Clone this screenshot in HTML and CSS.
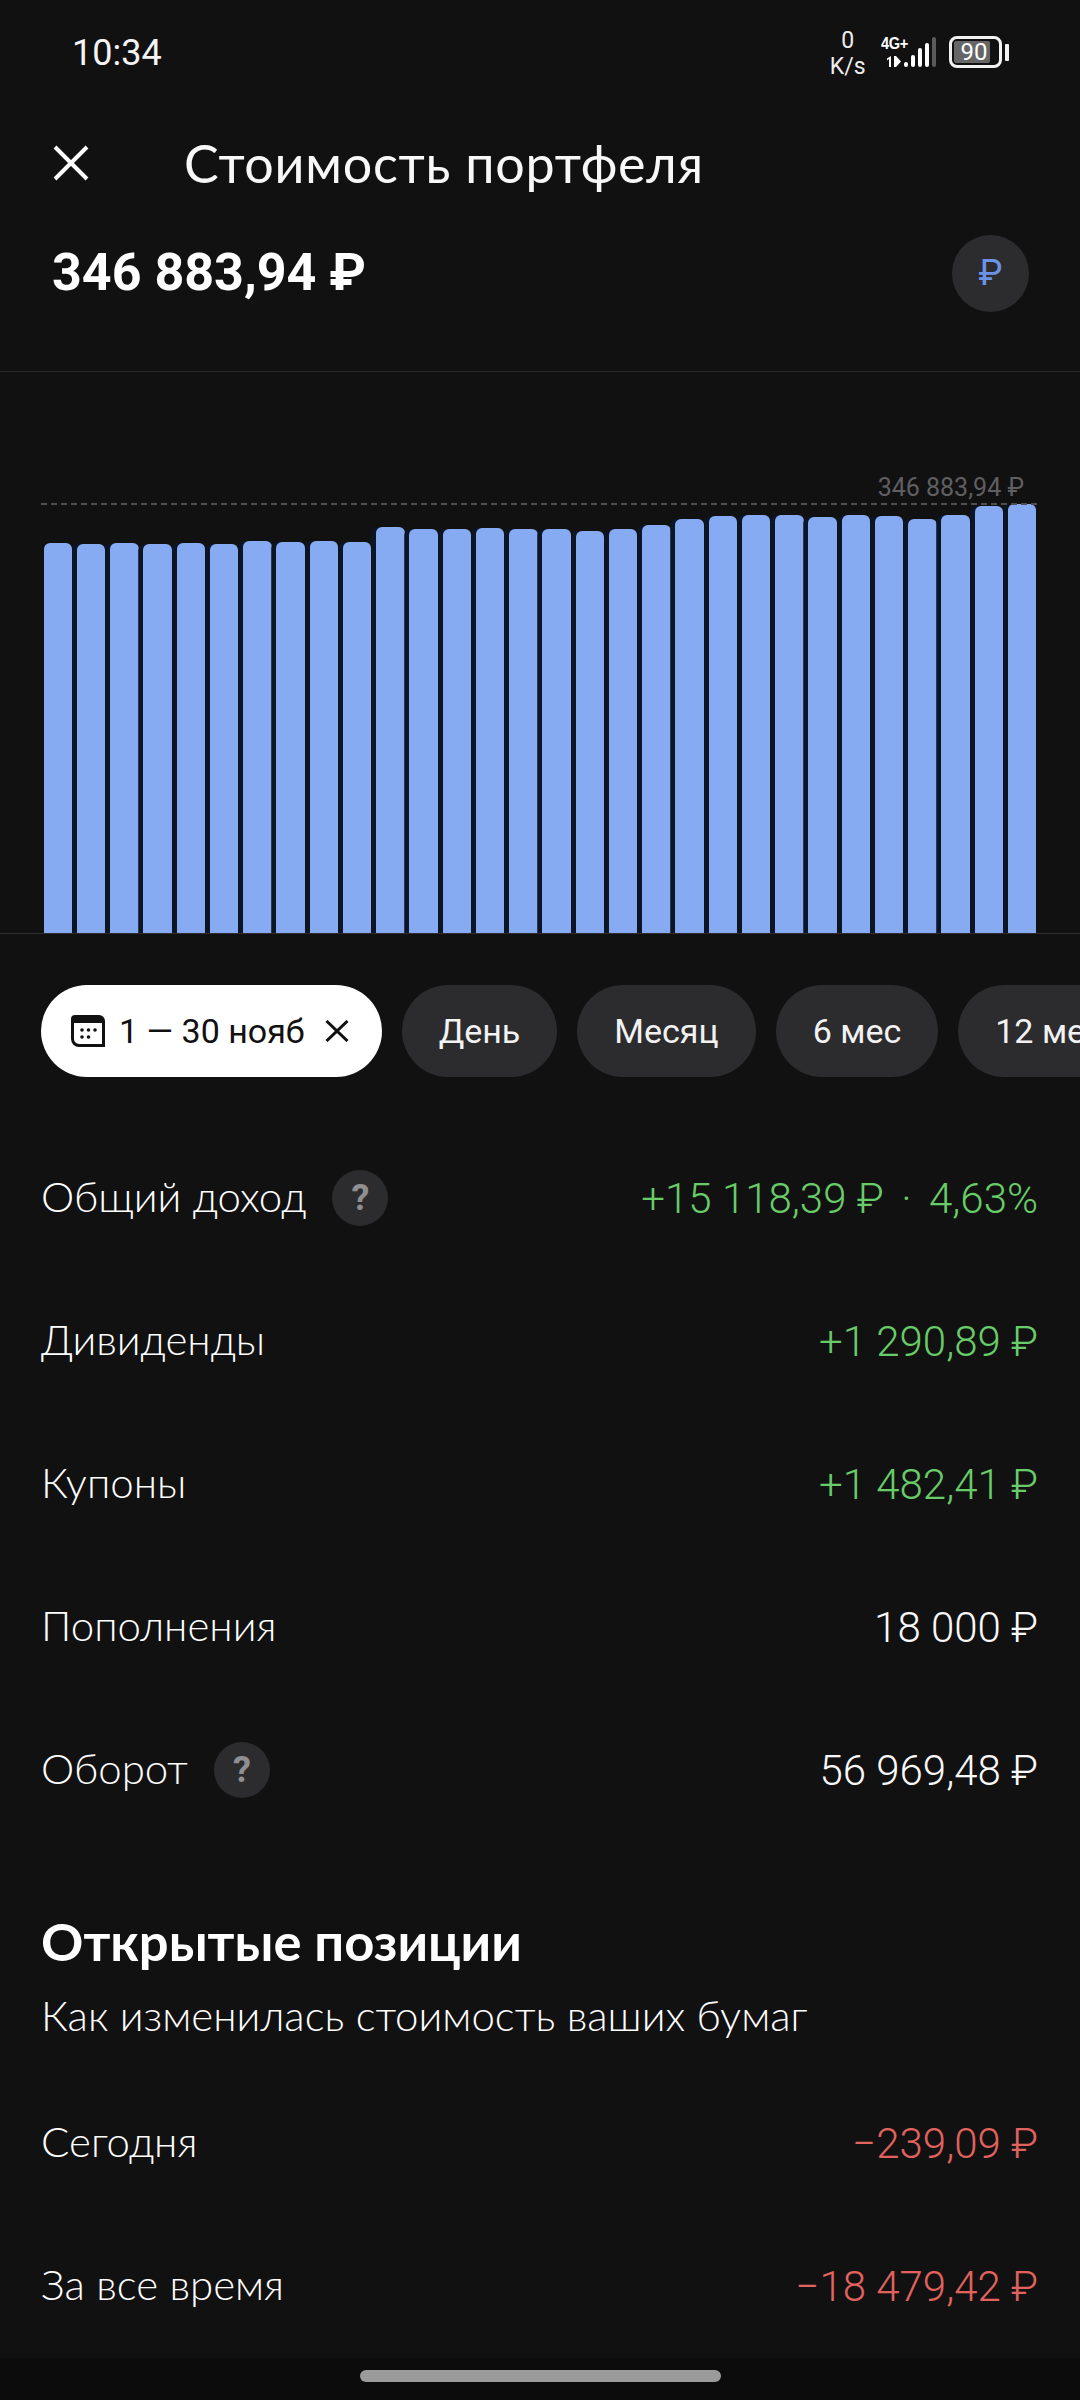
FILE: index.html
```html
<!DOCTYPE html>
<html lang="ru">
<head>
<meta charset="utf-8">
<title>Стоимость портфеля</title>
<link rel="stylesheet" href="styles.css">
</head>
<body>
<div class="screen">
  <header class="status">
    <span class="time">10:34</span>
    <div class="status-right">
      <div class="speed"><span>0</span><span>K/s</span></div>
      <div class="net">
        <span class="net-type">4G+</span>
        <svg class="net-arrows" width="15" height="11" viewBox="0 0 15 11"><path d="M4 0v11H2V3L0 4.500V2.500Z M7 0h2l0 0 5 5.500-5 5.500H7Z" fill="#fff"/></svg>
      </div>
      <div class="signal"><i class="s1"></i><i class="s2"></i><i class="s3"></i><i class="s4"></i><i class="s5"></i></div>
      <div class="battery"><div class="battery-body"><span class="battery-level">90</span></div><i class="battery-tip"></i></div>
    </div>
  </header>

  <div class="topbar">
    <svg class="close" width="36" height="36" viewBox="0 0 36 36"><path d="M2 2L34 34M34 2L2 34" stroke="#fff" stroke-width="4" fill="none"/></svg>
    <h1 class="title">Стоимость портфеля</h1>
  </div>

  <div class="summary">
    <span class="amount">346 883,94 ₽</span>
    <span class="coin">₽</span>
  </div>

  <div class="chart">
    <div class="max-line"></div>
    <span class="max-label">346 883,94 ₽</span>
    <div class="bars">
      <i class="bar" style="height:390px"></i><i class="bar" style="height:389px"></i><i class="bar" style="height:390px"></i><i class="bar" style="height:389.5px"></i><i class="bar" style="height:390px"></i><i class="bar" style="height:389.5px"></i><i class="bar" style="height:392px"></i><i class="bar" style="height:391.5px"></i><i class="bar" style="height:392px"></i><i class="bar" style="height:391.5px"></i><i class="bar" style="height:406px"></i><i class="bar" style="height:404px"></i><i class="bar" style="height:404px"></i><i class="bar" style="height:405px"></i><i class="bar" style="height:404px"></i><i class="bar" style="height:404px"></i><i class="bar" style="height:402px"></i><i class="bar" style="height:404px"></i><i class="bar" style="height:408px"></i><i class="bar" style="height:414px"></i><i class="bar" style="height:417px"></i><i class="bar" style="height:418px"></i><i class="bar" style="height:418px"></i><i class="bar" style="height:416px"></i><i class="bar" style="height:418px"></i><i class="bar" style="height:417px"></i><i class="bar" style="height:414px"></i><i class="bar" style="height:418px"></i><i class="bar" style="height:427px"></i><i class="bar" style="height:429px"></i>
    </div>
  </div>

  <nav class="chips">
    <div class="chip chip-active">
      <svg class="cal" width="34" height="32" viewBox="0 0 34 32"><path fill-rule="evenodd" d="M4 0H28a6 6 0 0 1 6 6V32H8a8 8 0 0 1-8-8V4a4 4 0 0 1 4-4Z M3 8V24a5 5 0 0 0 5 5H31V8Z" fill="#111"/><g fill="#111"><circle cx="11" cy="15" r="1.800"/><circle cx="17.500" cy="15" r="1.800"/><circle cx="24" cy="15" r="1.800"/><circle cx="11" cy="22" r="1.800"/><circle cx="17.500" cy="22" r="1.800"/></g></svg>
      <span>1 — 30 нояб</span>
      <svg class="chip-x" width="24" height="22" viewBox="0 0 24 22"><path d="M1.500 1L22.500 21M22.500 1L1.500 21" stroke="#111" stroke-width="3" fill="none"/></svg>
    </div>
    <div class="chip">День</div>
    <div class="chip">Месяц</div>
    <div class="chip">6 мес</div>
    <div class="chip">12 мес</div>
  </nav>

  <section class="rows">
    <div class="row"><div class="label"><span class="label-text">Общий доход</span><span class="hint">?</span></div><div class="value pos">+15 118,39 ₽<span class="dot">·</span>4,63%</div></div>
    <div class="row"><div class="label"><span class="label-text">Дивиденды</span></div><div class="value pos">+1 290,89 ₽</div></div>
    <div class="row"><div class="label"><span class="label-text">Купоны</span></div><div class="value pos">+1 482,41 ₽</div></div>
    <div class="row"><div class="label"><span class="label-text">Пополнения</span></div><div class="value">18 000 ₽</div></div>
    <div class="row"><div class="label"><span class="label-text">Оборот</span><span class="hint">?</span></div><div class="value">56 969,48 ₽</div></div>
  </section>

  <section class="positions">
    <h2 class="heading">Открытые позиции</h2>
    <p class="sub">Как изменилась стоимость ваших бумаг</p>
    <div class="row"><div class="label"><span class="label-text">Сегодня</span></div><div class="value neg">−239,09 ₽</div></div>
    <div class="row"><div class="label"><span class="label-text">За все время</span></div><div class="value neg">−18 479,42 ₽</div></div>
  </section>

  <footer class="navbar"><i class="handle"></i></footer>
</div>
</body>
</html>
```
FILE: styles.css
```css
* { box-sizing: border-box; margin: 0; padding: 0; }
html, body { background: #111112; }
body { font-family: "Lato", "Roboto", sans-serif; color: #fff; }
.screen { width: 1080px; height: 2400px; overflow: hidden; display: flex; flex-direction: column; background: #111112; }

.status { height: 96px; display: flex; justify-content: space-between; padding: 0 71px 0 72px; flex: none; }
.time { font: 400 36px/106px "Roboto", sans-serif; color: #f4f4f4; }
.status-right { display: flex; align-items: flex-start; padding-top: 28px; }
.speed { width: 46px; display: flex; flex-direction: column; align-items: center; font: 400 23px/26px "Roboto", sans-serif; color: #eee; margin-right: 10px; }
.net { width: 27px; height: 42px; margin-top: 7px; position: relative; }
.net-type { display: block; font: 700 17px/17px "Liberation Sans", sans-serif; letter-spacing: -.5px; transform: scaleX(.86); transform-origin: 0 0; white-space: nowrap; }
.net-arrows { position: absolute; left: 6px; top: 21px; }
.signal { display: flex; align-items: flex-end; gap: 2.600px; height: 30px; margin: 9px 0 0 -4px; }
.signal i { width: 4.400px; background: #fff; border-radius: 2px; }
.s1 { height: 5px; } .s2 { height: 12px; } .s3 { height: 19px; } .s4 { height: 24px; }
.signal .s5 { height: 30px; background: #5a5a5a; }
.battery { display: flex; align-items: center; margin: 8px 0 0 13px; }
.battery-body { width: 53px; height: 32px; border: 3px solid #f2f2f2; border-radius: 8px; padding: 2px 9px 2px 2px; display: flex; }
.battery-level { flex: 1; background: #666; border-radius: 2px; text-align: center; font: 400 24px/22px "Roboto", sans-serif; padding-left: 4px; }
.battery-tip { width: 4px; height: 17px; margin-left: 3px; background: #f2f2f2; border-radius: 1px; }

.topbar { height: 136px; display: flex; align-items: center; padding: 0 0 2px 53px; flex: none; }
.title { font-size: 52px; font-weight: 400; letter-spacing: .75px; margin-left: 95px; color: #f8f8f8; white-space: nowrap; }

.summary { height: 82px; margin-bottom: 57px; display: flex; justify-content: space-between; align-items: center; padding: 0 51px 0 52px; flex: none; }
.amount { font: 700 52px/1 "Roboto", sans-serif; }
.coin { width: 77px; height: 77px; border-radius: 50%; background: #2c2c2e; color: #6d93e6; font: 400 36px/77px "Roboto", sans-serif; text-align: center; }

.chart { height: 563px; flex: none; position: relative; border-top: 1px solid #29292b; border-bottom: 1px solid #2e2e30; display: flex; align-items: flex-end; padding-left: 43.500px; }
.bars { display: flex; align-items: flex-end; gap: 4.760px; }
.bar { display: block; width: 28.500px; flex: none; background: #86abf3; border-radius: 6px 6px 0 0; }
.bar + .bar { box-shadow: -4.760px 0 0 #0b1524; }
.max-line { position: absolute; left: 41px; right: 43px; top: 131px; border-top: 2px dashed #4f4f51; }
.max-label { position: absolute; right: 56px; top: 100px; font: 400 25px/32px "Roboto", sans-serif; color: #5f5f61; }

.chips { display: flex; gap: 20px; padding: 51px 0 0 41px; flex: none; width: 1200px; }
.chip { height: 92px; padding: 0 37px; border-radius: 46px; background: #2c2c2e; display: flex; align-items: center; font: 400 34px/1 "Roboto", sans-serif; color: #f2f2f2; white-space: nowrap; flex: none; }
.chip-active { background: #fff; color: #111; padding: 0 33px 0 30px; }
.cal { margin-right: 14px; }
.chip-x { margin-left: 20px; }

.rows { padding-top: 49px; flex: none; }
.row { height: 143px; display: flex; justify-content: space-between; align-items: center; padding: 0 42px 0 41px; }
.label { font-size: 42px; font-weight: 300; display: flex; align-items: center; color: #fff; }
.label-text { padding-bottom: 3px; }
.hint { width: 56px; height: 56px; border-radius: 50%; background: #2c2c2e; color: #8f8f93; font: 700 36px/56px "Roboto", sans-serif; text-align: center; margin-left: 26px; }
.value { font: 300 42px/1 "Roboto", sans-serif; white-space: nowrap; color: #f8f8f8; padding-top: 2px; }
.dot { margin: 0 17.500px; }
.pos { color: #68cc68; }
.neg { color: #e2625e; }

.positions { flex: none; padding-top: 70px; }
.heading { font-size: 52.500px; font-weight: 700; line-height: 60px; padding-left: 41px; }
.sub { font-size: 42px; font-weight: 300; line-height: 48px; padding: 0 0 32px 41px; margin-top: 20px; }

.navbar { position: fixed; left: 0; right: 0; bottom: 0; height: 42px; background: #0c0c0d; display: flex; justify-content: center; padding-top: 12px; }
.handle { display: block; width: 361px; height: 12px; border-radius: 6px; background: #9b9b9b; }
```
